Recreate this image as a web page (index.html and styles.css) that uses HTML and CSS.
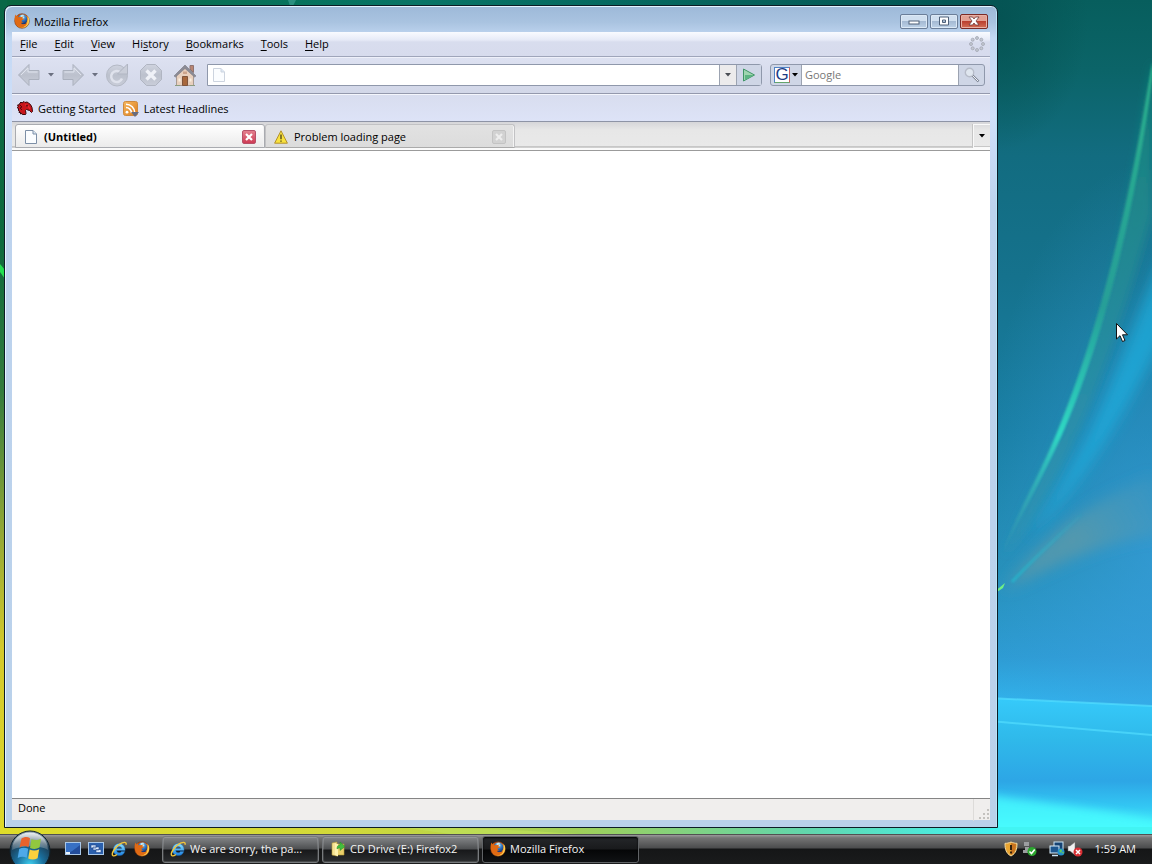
FILE: index.html
```html
<!DOCTYPE html>
<html lang="en">
<head>
<meta charset="utf-8">
<title>Mozilla Firefox</title>
<link rel="stylesheet" href="styles.css">
</head>
<body>
<svg class="defs" aria-hidden="true">
  <defs>
    <radialGradient id="globe" cx=".5" cy=".25" r=".75"><stop offset="0" stop-color="#9fdcf4"/><stop offset=".5" stop-color="#2f73c0"/><stop offset="1" stop-color="#12245f"/></radialGradient>
    <linearGradient id="fox" x1="0" y1="0" x2="1" y2="1"><stop offset="0" stop-color="#b9400c"/><stop offset=".5" stop-color="#e87414"/><stop offset="1" stop-color="#f6b830"/></linearGradient>
    <linearGradient id="gray" x1="0" y1="0" x2="0" y2="1"><stop offset="0" stop-color="#cfd3df"/><stop offset=".5" stop-color="#bcc1cd"/><stop offset="1" stop-color="#c9cdd9"/></linearGradient>
    <linearGradient id="ieblue" x1="0" y1="0" x2="0" y2="1"><stop offset="0" stop-color="#8de4ff"/><stop offset="1" stop-color="#1c7fe0"/></linearGradient>
    <linearGradient id="rss" x1="0" y1="0" x2="1" y2="1"><stop offset="0" stop-color="#f6b860"/><stop offset="1" stop-color="#dc7d1e"/></linearGradient>
    <radialGradient id="orb" cx=".5" cy=".85" r=".85"><stop offset="0" stop-color="#3fd0f0"/><stop offset=".4" stop-color="#1a6e9c"/><stop offset=".75" stop-color="#1b3b52"/><stop offset="1" stop-color="#90a4b0"/></radialGradient>
    <linearGradient id="orbshine" x1="0" y1="0" x2="0" y2="1"><stop offset="0" stop-color="#fff" stop-opacity=".85"/><stop offset="1" stop-color="#fff" stop-opacity=".15"/></linearGradient>
  </defs>
  <symbol id="i-firefox" viewBox="0 0 16 16">
    <circle cx="8" cy="8" r="7.300" fill="url(#fox)" stroke="#7c3412" stroke-width=".6"/>
    <circle cx="8.400" cy="6.600" r="5" fill="url(#globe)"/>
    <path d="M6.500 2.500c1-.8 2.500-.9 3.600-.3L9 3.300l1.500 1-1.700 1.400L7 4.500z" fill="#bfe9f5"/>
    <path d="M1.500 1.500C.6 3.500.3 6 1 8.500c1 3.500 3.500 5.500 7 5.500 3.800 0 6-2.500 6.300-5.500-1.300 2-3 3-5 2.800-1.200-.2-2-.8-2.500-1.600 1 .3 2 .1 2.900-.6-.9 0-1.600-.2-2-.9-.3-.6 0-1.200.7-1.300l1.300-.2c.2-.8-.5-1.200-1.600-1.500.2-.7.6-1.100 1.200-1.500-1-.2-1.900 0-2.600.6-.9-.3-1.700-.2-2.200.1-.6-.6-.8-1.500-.7-2.400-.6.4-1 .8-1.200 1.500z" fill="#e06a14"/>
    <path d="M13.500 2.800c1.900 2.200 2.200 5.100 1 7.600-1.300 2.800-4 4.200-7 3.900 3-.4 5-1.700 5.700-4.400.6-2.400.6-4.600.3-7.100z" fill="#ffd050"/>
  </symbol>
  <symbol id="i-ie" viewBox="0 0 16 16">
    <path fill-rule="evenodd" d="M8.200 2.600a5.900 5.900 0 0 1 5.900 5.900v1H5.700c.2 1.500 1.200 2.200 2.500 2.200 1 0 1.700-.4 2.200-1.200h3.400a5.900 5.900 0 0 1-11.500-2 5.900 5.900 0 0 1 5.900-5.900zM5.800 7.400h4.900c-.2-1.300-1.200-2-2.400-2-1.300 0-2.200.7-2.500 2z" fill="url(#ieblue)" stroke="#1768b8" stroke-width=".4"/>
    <path d="M15 3.700c.4-1.500-.2-2.400-1.600-2.300-2.700.2-6.800 3-9.500 6.300C1.500 10.700.5 13.800 2 14.700c.9.500 2.400-.1 4-1.200" fill="none" stroke="#f2c53b" stroke-width="1.400"/>
  </symbol>
  <symbol id="i-page" viewBox="0 0 14 14">
    <path d="M1.500.5h7.500l3.500 3.500v9.500h-11z" fill="#fbfdff" stroke="currentColor"/>
    <path d="M9 .5V4h3.500" fill="#dce8f5" stroke="currentColor"/>
  </symbol>
  <symbol id="i-arrow" viewBox="0 0 24 24">
    <path d="M1.500 12L12 1.500V7.500h10v9H12v6z" fill="url(#gray)" stroke="#aab0bd"/>
    <path d="M4 12l7-7v4h9.500" fill="none" stroke="#dfe3ed"/>
  </symbol>
  <symbol id="i-down" viewBox="0 0 6 4"><path d="M0 0h6L3 3.500z" fill="currentColor"/></symbol>
</svg>

<svg class="wallpaper" viewBox="0 0 1152 864" preserveAspectRatio="none" aria-hidden="true">
  <defs>
    <linearGradient id="sky" x1="0" y1="0" x2="0" y2="1"><stop offset="0" stop-color="#075e5d"/><stop offset=".08" stop-color="#0b6468"/><stop offset=".18" stop-color="#126c80"/><stop offset=".32" stop-color="#15728d"/><stop offset=".5" stop-color="#197fa4"/><stop offset=".66" stop-color="#258fb7"/><stop offset=".76" stop-color="#2d9bd2"/><stop offset=".81" stop-color="#31b1ea"/></linearGradient>
    <radialGradient id="east" gradientUnits="userSpaceOnUse" cx="1152" cy="560" r="400" gradientTransform="matrix(.45 0 0 1 634 0)"><stop offset="0" stop-color="#3aa0e2" stop-opacity=".6"/><stop offset="1" stop-color="#3aa0e2" stop-opacity="0"/></radialGradient>
    <linearGradient id="west" x1="0" y1="0" x2="0" y2="1"><stop offset="0" stop-color="#096747"/><stop offset=".28" stop-color="#0e6a3d"/><stop offset=".45" stop-color="#337b3d"/><stop offset=".62" stop-color="#95a936"/><stop offset=".75" stop-color="#d3c92c"/><stop offset="1" stop-color="#e0dc2b"/></linearGradient>
    <linearGradient id="top" x1="0" y1="0" x2="1" y2="0"><stop offset="0" stop-color="#086640"/><stop offset=".25" stop-color="#087259"/><stop offset=".42" stop-color="#077466"/><stop offset="1" stop-color="#055453"/></linearGradient>
    <radialGradient id="dusk"><stop offset="0" stop-color="#045050" stop-opacity=".8"/><stop offset="1" stop-color="#045050" stop-opacity="0"/></radialGradient>
    <linearGradient id="ground" x1="0" y1="0" x2="1" y2="0"><stop offset="0" stop-color="#dfdc2a"/><stop offset=".3" stop-color="#d2d939"/><stop offset=".5" stop-color="#a0cf58"/><stop offset=".7" stop-color="#62d6ac"/><stop offset=".87" stop-color="#42f4f3"/><stop offset="1" stop-color="#42f4f3"/></linearGradient>
    <linearGradient id="water" x1="0" y1="0" x2="0" y2="1"><stop offset="0" stop-color="#36cafa"/><stop offset=".25" stop-color="#2fb9ea"/><stop offset=".5" stop-color="#2da6e6"/><stop offset=".65" stop-color="#33c6f3"/><stop offset=".8" stop-color="#47f5fc"/><stop offset="1" stop-color="#4bfcfc"/></linearGradient>
    <linearGradient id="edge" x1="0" y1="0" x2="0" y2="1"><stop offset="0" stop-color="#2bb18c"/><stop offset=".5" stop-color="#259f98"/><stop offset=".76" stop-color="#2fd8c4"/><stop offset="1" stop-color="#3a9cac" stop-opacity=".2"/></linearGradient>
    <linearGradient id="veil" x1="0" y1="0" x2="0" y2="1"><stop offset="0" stop-color="#178c7e" stop-opacity=".8"/><stop offset="1" stop-color="#3a9aac" stop-opacity=".35"/></linearGradient>
    <linearGradient id="beam" gradientUnits="userSpaceOnUse" x1="1010" y1="585" x2="1152" y2="500"><stop offset="0" stop-color="#5f9aa8" stop-opacity=".7"/><stop offset=".5" stop-color="#5f9aa8" stop-opacity=".75"/><stop offset="1" stop-color="#4f9ab8" stop-opacity=".35"/></linearGradient>
    <linearGradient id="rim" gradientUnits="userSpaceOnUse" x1="1010" y1="585" x2="1090" y2="505"><stop offset="0" stop-color="#20bcd0"/><stop offset="1" stop-color="#20bcd0" stop-opacity="0"/></linearGradient>
    <filter id="b1"><feGaussianBlur stdDeviation="1"/></filter>
    <filter id="b4"><feGaussianBlur stdDeviation="4"/></filter>
    <filter id="b7"><feGaussianBlur stdDeviation="7"/></filter>
  </defs>
  <rect width="1152" height="864" fill="url(#sky)"/>
  <rect x="960" y="150" width="192" height="714" fill="url(#east)"/>
  <ellipse cx="998" cy="20" rx="90" ry="130" fill="url(#dusk)"/>
  <path d="M1152 60C1130 220 1095 350 1060 430c-22 52-42 87-55 125 45-52 88-130 147-340z" fill="url(#veil)" filter="url(#b4)"/>
  <path d="M1165 250C1130 330 1108 400 1078 455c-20 36-34 60-50 84 38-40 76-84 137-205z" fill="#1bb3e4" opacity=".65" filter="url(#b7)"/>
  <path d="M1004 590c35-45 70-82 150-115l10 60c-65 5-105 30-160 55z" fill="url(#beam)" filter="url(#b7)"/>
  <path d="M1012 582c22-24 38-38 70-68" fill="none" stroke="url(#rim)" stroke-width="3" opacity=".7" filter="url(#b1)"/>
  <path d="M1152 62C1128 220 1093 345 1058 430c-19 47-40 80-55 122 22-43 41-77 58-115C1099 352 1134 225 1153 72z" fill="url(#edge)" filter="url(#b1)"/>
  <path d="M994 592l11-9-2 5-9 6z" fill="#70ef85"/>
  <path d="M990 698l162 8v158H990z" fill="url(#water)"/>
  <path d="M990 698l162 8M990 721l162 14" fill="none" stroke="#55deff" stroke-width="2" opacity=".65"/>
  <path d="M980 794c70 10 120 14 182 28v60H980z" fill="#49ffff" opacity=".75" filter="url(#b4)"/>
  <rect width="1000" height="6" fill="url(#top)"/>
  <path d="M288 0h8l-3 6h-3z" fill="#2b9080"/>
  <rect width="7" height="864" fill="url(#west)"/>
  <path d="M0 264l5 6v9l-5-7z" fill="#24df50"/>
  <rect y="827" width="1152" height="10" fill="url(#ground)"/>
  <path d="M400 827c75 1 120 3 180 7H450z" fill="#c2e25b" opacity=".6"/>
</svg>

<main class="desktop">
  <section class="window" aria-label="Mozilla Firefox">
    <header class="titlebar">
      <svg class="ico16"><use href="#i-firefox"/></svg>
      <h1 class="title">Mozilla Firefox</h1>
      <div class="winbtns">
        <button class="winbtn" aria-label="Minimize"><svg viewBox="0 0 14 10"><rect x="2" y="5" width="10" height="3" fill="#fff" stroke="#4e6078"/></svg></button>
        <button class="winbtn" aria-label="Maximize"><svg viewBox="0 0 14 10"><path fill-rule="evenodd" d="M2.500 1h9v8h-9zM5.500 4v2.500h3V4z" fill="#fff" stroke="#4e6078"/></svg></button>
        <button class="winbtn winbtn-close" aria-label="Close"><svg viewBox="0 0 14 10"><path d="M2 1h3.500L7 3l1.500-2H12L9 5l3 4H8.500L7 7 5.500 9H2l3-4z" fill="#fff" stroke="#6e3838" stroke-width=".8"/></svg></button>
      </div>
    </header>

    <div class="client">
      <nav class="menubar">
        <button class="menu"><u>F</u>ile</button>
        <button class="menu"><u>E</u>dit</button>
        <button class="menu"><u>V</u>iew</button>
        <button class="menu">Hi<u>s</u>tory</button>
        <button class="menu"><u>B</u>ookmarks</button>
        <button class="menu"><u>T</u>ools</button>
        <button class="menu"><u>H</u>elp</button>
        <svg class="throbber" viewBox="0 0 16 16" aria-hidden="true"><g fill="#c4c8d2" stroke="#a2a6b2" stroke-width=".8"><circle cx="8" cy="2" r="1.500"/><circle cx="12.300" cy="3.700" r="1.500"/><circle cx="14" cy="8" r="1.500"/><circle cx="12.300" cy="12.300" r="1.500"/><circle cx="8" cy="14" r="1.500"/><circle cx="3.700" cy="12.300" r="1.500"/><circle cx="2" cy="8" r="1.500"/><circle cx="3.700" cy="3.700" r="1.500"/></g></svg>
      </nav>

      <div class="navbar">
        <button class="tool" aria-label="Back"><svg><use href="#i-arrow"/></svg></button>
        <button class="tool-drop" aria-label="Back history"><svg class="down"><use href="#i-down"/></svg></button>
        <button class="tool" aria-label="Forward"><svg class="flip"><use href="#i-arrow"/></svg></button>
        <button class="tool-drop" aria-label="Forward history"><svg class="down"><use href="#i-down"/></svg></button>
        <button class="tool tool-gap" aria-label="Reload"><svg viewBox="0 0 24 24"><circle cx="12" cy="12.500" r="10.500" fill="url(#gray)" stroke="#b4b9c5"/><path d="M17 15.500a5.600 5.600 0 1 1-1.500-6.200" fill="none" stroke="#dfe2ec" stroke-width="2.500"/><path d="M22.500 1v10h-10z" fill="#c9cdd8" stroke="#b0b5c2"/></svg></button>
        <button class="tool tool-gap" aria-label="Stop"><svg viewBox="0 0 24 24"><path d="M7.500 1.500h9l6 6v9l-6 6h-9l-6-6v-9z" fill="url(#gray)" stroke="#b0b5c2"/><path d="M7.500 7.500l9 9m0-9l-9 9" stroke="#eff1f7" stroke-width="3.400"/></svg></button>
        <button class="tool tool-gap" aria-label="Home"><svg viewBox="0 0 24 24"><path d="M3.500 11v11.500h17V11L12 3z" fill="#e8d0be" stroke="#a89a92"/><path d="M17 2.500h3.500v7L17 6z" fill="#b98573" stroke="#8f7470"/><path d="M1 13L12 2l11 11-1.500 1L12 5.500 2.500 14z" fill="#8b8b95" stroke="#797983" stroke-width=".6"/><path d="M9.500 13.500h5v9h-5z" fill="#a8673c" stroke="#80553c"/><path d="M16.500 15.500h2v3h-2zM5.500 15.500h2v3h-2z" fill="#faf0e0"/><path d="M10 8.500h4v2.500h-4z" fill="#cda48c"/><path d="M2 22.500h5M17 22.500h5" stroke="#8b9c80"/></svg></button>
        <form class="urlbox">
          <svg class="ico14 url-ico"><use href="#i-page"/></svg>
          <input class="field" type="text" aria-label="Location">
          <button class="url-drop" type="button" aria-label="Show history"><svg class="down"><use href="#i-down"/></svg></button>
          <button class="go" type="button" aria-label="Go"><svg viewBox="0 0 14 14"><path d="M1.500 1l11 6-11 6z" fill="#9fd5b0" stroke="#3f9566"/><path d="M3 7h9L3 12z" fill="#5db482"/></svg></button>
        </form>
        <form class="searchbox">
          <button class="engine" type="button" aria-label="Search engine: Google"><span class="glogo">G</span><svg class="down"><use href="#i-down"/></svg></button>
          <input class="field search-field" type="text" placeholder="Google" aria-label="Search">
          <button class="search-go" type="button" aria-label="Search"><svg viewBox="0 0 16 16"><circle cx="5.500" cy="5.500" r="4.200" fill="#dfe6ef" stroke="#b7bcc9" stroke-width="1.400"/><path d="M8.500 8.500l6 6" stroke="#7e8594" stroke-width="2.400"/><path d="M8.500 8.500l5.500 5.500" stroke="#f1f3f8" stroke-width="1"/></svg></button>
        </form>
      </div>

      <div class="bookmarks">
        <a class="bookmark" href="#"><svg class="ico16" viewBox="0 0 16 16"><path d="M3 2l1-1 1 1 2-1.500 1 1 2-.5 1.500 1 2 1.500 1.500 3 .5 4-1 1-2-2-3-1-1 1 .5 3L8 14l-1-1-1 1-1-1.500-1.500.5L3.500 11.500 2 11.500l.5-1.500L1 9l1-1L0 6.500l1.500-1L.5 4l1.800-.3z" fill="#c9151b" stroke="#3c070b" stroke-width="1"/><path d="M8 3.500l3 1.500 2 3" fill="none" stroke="#ea2b30" stroke-width="1.200"/><circle cx="10" cy="4.700" r=".8" fill="#260406"/><path d="M3 4l2 2-2 1 2 2" fill="none" stroke="#5a080d"/></svg>Getting Started</a>
        <a class="bookmark" href="#"><svg class="ico16" viewBox="0 0 16 16"><rect x=".5" y=".5" width="14" height="14" rx="2" fill="url(#rss)" stroke="#ce893d"/><circle cx="4" cy="11.200" r="1.400" fill="#fff"/><path d="M3 6.500a5.500 5.500 0 0 1 5.500 5.500M3 3.200A8.800 8.800 0 0 1 11.800 12" fill="none" stroke="#fff" stroke-width="1.600"/><path d="M8 11h8l-4 5z" fill="#666d82"/></svg>Latest Headlines</a>
      </div>

      <div class="tabs">
        <div class="tab tab-on"><svg class="ico14"><use href="#i-page"/></svg><span class="tab-text">(Untitled)</span><button class="tab-x" aria-label="Close tab"><svg viewBox="0 0 14 14"><path d="M4 4l6 6m0-6l-6 6" stroke="#fff" stroke-width="2.200"/></svg></button></div>
        <div class="tab"><svg class="ico14" viewBox="0 0 14 14"><path d="M7 .8l6.400 12.400H.6z" fill="#f9e23e" stroke="#b2902a" stroke-linejoin="round"/><path d="M7 4.500v4.700M7 10.500v1.300" stroke="#443e18" stroke-width="1.300"/></svg><span class="tab-text">Problem loading page</span><button class="tab-x" aria-label="Close tab"><svg viewBox="0 0 14 14"><path d="M4 4l6 6m0-6l-6 6" stroke="#eee" stroke-width="2.200"/></svg></button></div>
        <button class="tab-list" aria-label="List all tabs"><svg class="down"><use href="#i-down"/></svg></button>
      </div>

      <div class="page"></div>

      <footer class="status"><span>Done</span><span class="grip"><svg viewBox="0 0 12 12"><path d="M9 1h2v2H9zM9 5h2v2H9zM9 9h2v2H9zM5 5h2v2H5zM5 9h2v2H5zM1 9h2v2H1z" fill="#c3c1be"/></svg></span></footer>
    </div>
  </section>
</main>

<footer class="taskbar">
  <button class="start" aria-label="Start">
    <svg viewBox="0 0 42 42"><circle cx="21" cy="21" r="20" fill="url(#orb)" stroke="#10212b"/><path d="M3 20C3 9 11 2.500 21 2.500S39 9 39 20c-8-5-26-5-36 0z" fill="url(#orbshine)"/><path d="M12.500 8.500c3-2 6-2 8.500-.3L19.500 17.200c-3-1.600-6-1.500-9 .2z" fill="#e9622d"/><path d="M22.500 9c3 1.600 6 1.500 9.500-.5l-1.500 9.100c-3.200 1.800-6.500 1.800-9.500.3z" fill="#92c83e"/><path d="M10.200 19c3-1.700 6-1.700 9-.2l-1.500 9c-3-1.500-6-1.400-9 .3z" fill="#4ea9e9"/><path d="M20.700 19.500c3 1.500 6.300 1.500 9.500-.3l-1.600 9.100c-3.200 1.700-6.400 1.700-9.400.2z" fill="#fbd13d"/></svg>
  </button>
  <nav class="quick">
    <button class="qbtn" aria-label="Show desktop"><svg class="ico16" viewBox="0 0 16 16"><rect x=".5" y="1.500" width="15" height="12" fill="#3770c4" stroke="#a9c8e8"/><path d="M1 13c4-1 9-5 14-9v9z" fill="#234d9c"/><path d="M1 12h4" stroke="#e9f2fb" stroke-width="2"/></svg></button>
    <button class="qbtn" aria-label="Switch windows"><svg class="ico16" viewBox="0 0 16 16"><rect x=".5" y="1.500" width="15" height="12" fill="#2b60ad" stroke="#a9c8e8"/><path d="M3 4h5v3H3zM5 6h6v3H5zM8 8.500h5v3H8z" fill="#dcecff" stroke="#23478a" stroke-width=".6"/></svg></button>
    <button class="qbtn" aria-label="Internet Explorer"><svg class="ico16"><use href="#i-ie"/></svg></button>
    <button class="qbtn" aria-label="Firefox"><svg class="ico16"><use href="#i-firefox"/></svg></button>
  </nav>
  <nav class="tasks">
    <button class="task"><svg class="ico16"><use href="#i-ie"/></svg><span>We are sorry, the pa...</span></button>
    <button class="task"><svg class="ico16" viewBox="0 0 16 16"><path d="M2 2l5-1v14l-5-1z" fill="#f6e394" stroke="#b79a38" stroke-width=".6"/><path d="M6 3h8v11H6z" fill="#e9cf6a" stroke="#b79a38" stroke-width=".6"/><path d="M5 2.500l3 .5v12.500l-3-1.500z" fill="#fff2ae"/><path d="M7 8c0-3 1-4 3-4V1l5 4.500-5 4V7C9 7 8 7 7 8z" fill="#43bd3d" stroke="#278b28" stroke-width=".5"/></svg><span>CD Drive (E:) Firefox2</span></button>
    <button class="task task-on"><svg class="ico16"><use href="#i-firefox"/></svg><span>Mozilla Firefox</span></button>
  </nav>
  <div class="tray">
    <svg class="ico16" viewBox="0 0 16 16"><path d="M8 1c2 1 4 1.300 6 1.300 0 6-1 10-6 12.700C3 12.300 2 8.300 2 2.300 4 2.300 6 2 8 1z" fill="#e8a431" stroke="#f4d9a0"/><path d="M8 2v12c4-2.500 5-6 5-11z" fill="#c87420"/><path d="M8 4v5M8 10.500v2" stroke="#34210b" stroke-width="2"/></svg>
    <svg class="ico16" viewBox="0 0 16 16"><path d="M3 1h5v4H3zM4 6h4v3H4zM2 9h7v3H2z" fill="#9b9da0"/><circle cx="11" cy="10.500" r="4.500" fill="#2ca62f"/><path d="M8.500 10.500l2 2 3.200-4" fill="none" stroke="#fff" stroke-width="1.600"/></svg>
    <svg class="ico16 tray-gap" viewBox="0 0 16 16"><rect x="5" y="1" width="9" height="8" fill="#164373" stroke="#c9e4f5"/><rect x="1" y="5" width="9" height="7" fill="#1d568f" stroke="#d9eefb"/><path d="M3 14.500h6" stroke="#cbe3f4" stroke-width="1.500"/><circle cx="12" cy="11" r="3.500" fill="#2591cc"/><path d="M10 10l2-2 1 2-1 2zM13 11l2 0-1 2z" fill="#68ca56"/></svg>
    <svg class="ico16" viewBox="0 0 16 16"><path d="M1 5h2l5-4v13L3 10H1z" fill="#f2f2f2" stroke="#777" stroke-width=".5"/><circle cx="11" cy="11" r="4.500" fill="#d82f34"/><path d="M9 9l4 4m0-4l-4 4" stroke="#fff" stroke-width="1.500"/></svg>
    <time class="clock">1:59 AM</time>
  </div>
</footer>

<svg class="cursor" viewBox="0 0 12 20" aria-hidden="true"><path d="M.5.5v15.500l3.500-3.300 2.500 5.800 2.500-1-2.500-5.700h5z" fill="#fff" stroke="#111"/></svg>
</body>
</html>
```
FILE: styles.css
```css
* { box-sizing: border-box; }

body {
  margin: 0;
  height: 100vh;
  display: flex;
  flex-direction: column;
  overflow: hidden;
  font: 11px/16px "Open Sans", "Noto Sans", sans-serif;
  color: #000;
}

button, input {
  font: inherit;
  color: inherit;
  margin: 0;
  padding: 0;
  border: 0;
  background: none;
}

button { display: flex; align-items: center; justify-content: center; }
svg { display: block; flex: none; }

.defs { position: absolute; width: 0; height: 0; }
.wallpaper { position: absolute; top: 0; left: 0; width: 100%; height: 100%; z-index: -1; }
.cursor { position: absolute; left: 1116px; top: 323px; width: 12px; height: 20px; }
.ico16 { width: 16px; height: 16px; }
.ico14 { width: 14px; height: 14px; color: #7d8fa6; }
.down { width: 6px; height: 4px; }
.flip { transform: scaleX(-1); }

.desktop { flex: 1; min-height: 0; display: flex; padding: 5px 154px 6px 4px; }

.window {
  flex: 1;
  min-width: 0;
  display: flex;
  flex-direction: column;
  padding: 0 7px 7px;
  border: 1px solid #0c1c26;
  border-radius: 7px 7px 0 0;
  background: linear-gradient(#9db9d8, #a9c3e0 16px, #c3d8f3 32px, #d0e0fa 110px, #bdd3ee 200px, #b9d1ea);
  box-shadow: inset 1px 1px 0 #e4f4ff, inset -1px 0 0 #b7e4f8;
}

.titlebar { height: 26px; display: flex; align-items: center; gap: 4px; padding: 4px 2px 0; }
.title { flex: 1; margin: 0; padding-top: 1px; font-size: 11px; font-weight: 400; }
.winbtns { display: flex; gap: 2px; }
.winbtn {
  width: 28px;
  height: 15px;
  border: 1px solid #6b7e98;
  border-radius: 2px;
  background: linear-gradient(#d0dfef 45%, #a5bad3 50%, #bdd2e8);
  box-shadow: inset 0 0 0 1px #dce9f6;
}
.winbtn svg { width: 14px; height: 10px; }
.winbtn-close { border-color: #7b2a25; background: linear-gradient(#e2a093 45%, #bb4030 50%, #d37058); box-shadow: inset 0 0 0 1px #e9b1a5; }

.client { flex: 1; min-height: 0; display: flex; flex-direction: column; }

.menubar {
  height: 25px;
  display: flex;
  align-items: center;
  gap: 17px;
  padding: 0 5px 0 8px;
  border-bottom: 1px solid #9fa5ba;
  background: linear-gradient(#f9fbff, #e6eaf7 8px, #d8ddee 10px, #d7dbed);
}
.menu { text-underline-offset: 2px; }
.throbber { width: 16px; height: 16px; margin-left: auto; }

.navbar {
  height: 37px;
  display: flex;
  align-items: center;
  padding: 0 5px 1px;
  border-top: 1px solid #eef0fa;
  border-bottom: 1px solid #9499ad;
  background: linear-gradient(#dde1f1, #d2d7e8);
}
.tool { width: 24px; height: 24px; }
.tool svg { width: 24px; height: 24px; }
.tool-drop { width: 20px; height: 24px; color: #6b7080; }
.tool-gap + .tool-gap { margin-left: 10px; }
.urlbox, .searchbox { display: flex; height: 22px; }
.urlbox {
  flex: 1;
  margin: 0 8px 0 10px;
  border: 1px solid #8f98ab;
  border-radius: 0 3px 3px 0;
  background: #fff;
}
.url-ico { margin: 3px 4px; color: #cdd4df; }
.field { flex: 1; min-width: 0; outline: 0; background: #fff; }
.url-drop { width: 17px; border-left: 1px solid #9ca3b1; background: #ecebec; color: #4b4e55; }
.go { width: 25px; border-left: 1px solid #9ca3b1; background: #cfd6e6; }
.go svg { width: 14px; height: 14px; }
.searchbox {
  width: 215px;
  border: 1px solid #8f98ab;
  border-radius: 3px;
  background: #cfd6e6;
  overflow: hidden;
}
.engine { width: 30px; gap: 2px; }
.glogo {
  width: 16px;
  height: 16px;
  border: 1px solid;
  border-color: #5183c6 #c96060 #65a56c #5183c6;
  background: #fff;
  color: #1d3c86;
  font: 17px/14px "Liberation Sans", sans-serif;
}
.search-field { padding: 0 3px; border-left: 1px solid #9ca3b1; }
.search-field::placeholder { color: #777; }
.search-go { width: 26px; border-left: 1px solid #9ca3b1; }
.search-go svg { width: 16px; height: 16px; }

.bookmarks {
  height: 28px;
  display: flex;
  align-items: center;
  gap: 7px;
  padding: 1px 5px 0;
  border-top: 1px solid #f4f6fd;
  border-bottom: 1px solid #8e94a6;
  background: linear-gradient(#d8ddef, #dde3f7);
}
.bookmark { display: flex; align-items: center; gap: 5px; color: inherit; text-decoration: none; }

.tabs {
  height: 29px;
  display: flex;
  padding: 2px 0 2px 3px;
  border-bottom: 1px solid #9b9b9b;
  background: linear-gradient(#d6d6d9, #e7e7e7 8px, #e9e9e9 24px, #a5a5a5 25px, #fafafa 26px);
}
.tab {
  width: 250px;
  display: flex;
  align-items: center;
  gap: 6px;
  padding: 1px 8px 0;
  border: 1px solid #c2c2c4;
  border-bottom-color: #aaa;
  border-radius: 3px 3px 0 0;
  background: linear-gradient(#e2e2e2, #dcdcdc);
  box-shadow: inset -1px 0 0 #f4f4f4;
}
.tab-on { font-weight: 700; background: linear-gradient(#fff, #ebebeb); border-color: #a9abb0; }
.tab-text { flex: 1; }
.tab-x { width: 14px; height: 14px; border: 1px solid #c3c3c3; border-radius: 2px; background: #d2d2d2; }
.tab-x svg { width: 14px; height: 14px; }
.tab-on .tab-x { border-color: #b65068; background: linear-gradient(#e37f8d, #cf3c55); }
.tab-list { width: 17px; margin-left: auto; border: 1px solid #f9f9f9; border-right: 0; box-shadow: -1px 0 0 #c5c5c5; }

.page { flex: 1; background: #fff; }

.status {
  height: 22px;
  display: flex;
  align-items: center;
  justify-content: space-between;
  padding: 0 0 4px 6px;
  border-top: 1px solid #858585;
  background: #f0eeed;
}
.grip { width: 17px; height: 22px; padding: 9px 0 0 4px; border-left: 1px solid #dddbd9; margin-bottom: -4px; }
.grip svg { width: 12px; height: 12px; }

.taskbar {
  height: 30px;
  display: flex;
  align-items: center;
  padding: 0 16px 1px 9px;
  border-top: 1px solid #515151;
  background: linear-gradient(#9a9a9a, #747474 3px, #4b4c4d 13px, #151617 14px, #1a1b1c);
  color: #f5f5f5;
}
.start { width: 42px; height: 30px; align-items: flex-start; }
.start svg { width: 42px; height: 42px; margin-top: -4px; }
.quick { display: flex; gap: 7px; margin-left: 14px; }
.tasks { flex: 1; min-width: 0; display: flex; gap: 3px; margin-left: 12px; }
.task {
  width: 157px;
  height: 27px;
  justify-content: flex-start;
  gap: 4px;
  padding: 0 7px;
  border: 1px solid #777a7d;
  border-radius: 3px;
  background: linear-gradient(#858789, #4d4f51 12px, #17181a 13px, #2b2d2f);
  box-shadow: inset 0 0 0 1px #ffffff22;
  white-space: nowrap;
}
.task-on { border-color: #606366; background: linear-gradient(#25272a, #191a1c 12px, #050607 13px, #101214); box-shadow: inset 0 1px 2px #000; }
.tray { display: flex; align-items: center; gap: 2px; }
.tray-gap { margin-left: 10px; }
.clock { margin-left: 10px; }
```
